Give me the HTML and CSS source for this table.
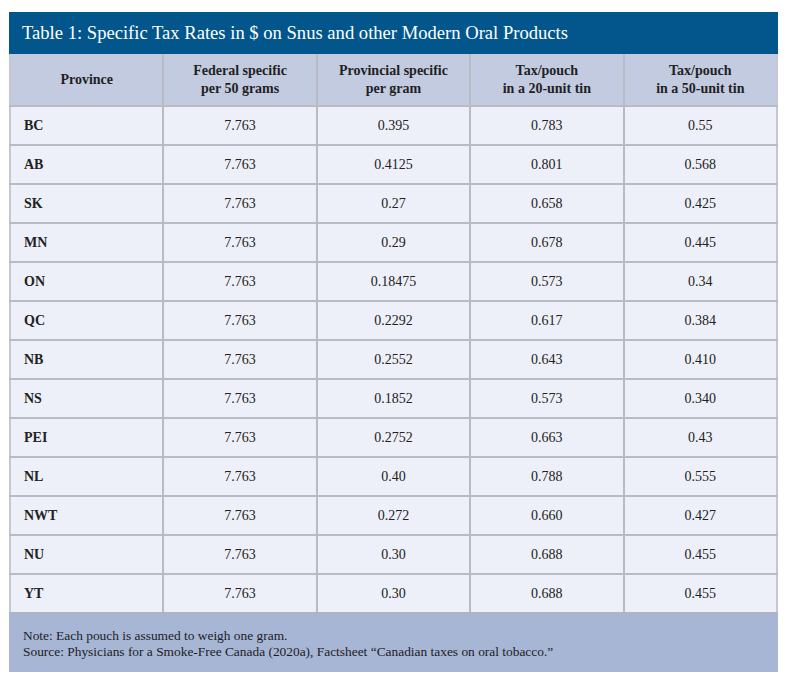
FILE: index.html
```html
<!DOCTYPE html>
<html lang="en">
<head>
<meta charset="utf-8">
<title>Table 1</title>
<link rel="stylesheet" href="styles.css">
</head>
<body>
<div class="figure">
  <div class="title">Table 1: Specific Tax Rates in $ on Snus and other Modern Oral Products</div>
  <table class="rates">
    <thead>
      <tr>
        <th>Province</th>
        <th>Federal specific<br>per 50 grams</th>
        <th>Provincial specific<br>per gram</th>
        <th>Tax/pouch<br>in a 20-unit tin</th>
        <th>Tax/pouch<br>in a 50-unit tin</th>
      </tr>
    </thead>
    <tbody>
      <tr><td>BC</td><td>7.763</td><td>0.395</td><td>0.783</td><td>0.55</td></tr>
      <tr><td>AB</td><td>7.763</td><td>0.4125</td><td>0.801</td><td>0.568</td></tr>
      <tr><td>SK</td><td>7.763</td><td>0.27</td><td>0.658</td><td>0.425</td></tr>
      <tr><td>MN</td><td>7.763</td><td>0.29</td><td>0.678</td><td>0.445</td></tr>
      <tr><td>ON</td><td>7.763</td><td>0.18475</td><td>0.573</td><td>0.34</td></tr>
      <tr><td>QC</td><td>7.763</td><td>0.2292</td><td>0.617</td><td>0.384</td></tr>
      <tr><td>NB</td><td>7.763</td><td>0.2552</td><td>0.643</td><td>0.410</td></tr>
      <tr><td>NS</td><td>7.763</td><td>0.1852</td><td>0.573</td><td>0.340</td></tr>
      <tr><td>PEI</td><td>7.763</td><td>0.2752</td><td>0.663</td><td>0.43</td></tr>
      <tr><td>NL</td><td>7.763</td><td>0.40</td><td>0.788</td><td>0.555</td></tr>
      <tr><td>NWT</td><td>7.763</td><td>0.272</td><td>0.660</td><td>0.427</td></tr>
      <tr><td>NU</td><td>7.763</td><td>0.30</td><td>0.688</td><td>0.455</td></tr>
      <tr><td>YT</td><td>7.763</td><td>0.30</td><td>0.688</td><td>0.455</td></tr>
    </tbody>
  </table>
  <div class="notes">
    <p>Note: Each pouch is assumed to weigh one gram.</p>
    <p>Source: Physicians for a Smoke-Free Canada (2020a), Factsheet “Canadian taxes on oral tobacco.”</p>
  </div>
</div>
</body>
</html>
```

FILE: styles.css
```css
html, body {
  margin: 0;
  padding: 0;
  background: #ffffff;
}

body {
  font-family: "Liberation Serif", "Times New Roman", serif;
  color: #1a1a1a;
  padding: 12px 0 0 9px;
}

.figure {
  width: 769px;
}

.title {
  background: #02568b;
  color: #ffffff;
  height: 42px;
  box-sizing: border-box;
  padding: 0 0 0 13px;
  display: flex;
  align-items: center;
  font-family: "Liberation Serif", "Times New Roman", serif;
  font-size: 18.6px;
}

.rates {
  width: 100%;
  border-collapse: collapse;
  table-layout: fixed;
}

.rates th,
.rates td {
  border: 2px solid #b8bbc3;
  padding: 0;
  font-family: "Liberation Serif", "Times New Roman", serif;
  font-size: 14px;
}

.rates tr > :first-child {
  border-left-color: #c4c8d0;
}

.rates tr > :last-child {
  border-right-color: #c4c8d0;
}

.rates thead tr:first-child th {
  border-top: 0;
}

.rates th {
  background: #c2cbe0;
  height: 51px;
  font-weight: bold;
  line-height: 18px;
  text-align: center;
  color: #1f1f24;
}

.rates td {
  background: #edf0f8;
  height: 37px;
  text-align: center;
  color: #222222;
}

.rates td:first-child {
  text-align: left;
  padding-left: 13px;
  font-weight: bold;
}

.rates tbody tr:last-child td {
  border-bottom-color: #b0b4bd;
}

.notes {
  background: #a7b6d4;
  padding: 14px 0 9px 14px;
  height: 58px;
  box-sizing: border-box;
  font-family: "Liberation Serif", "Times New Roman", serif;
  font-size: 13.4px;
  line-height: 16px;
  color: #1c1c24;
}

.notes p {
  margin: 0;
}
```
